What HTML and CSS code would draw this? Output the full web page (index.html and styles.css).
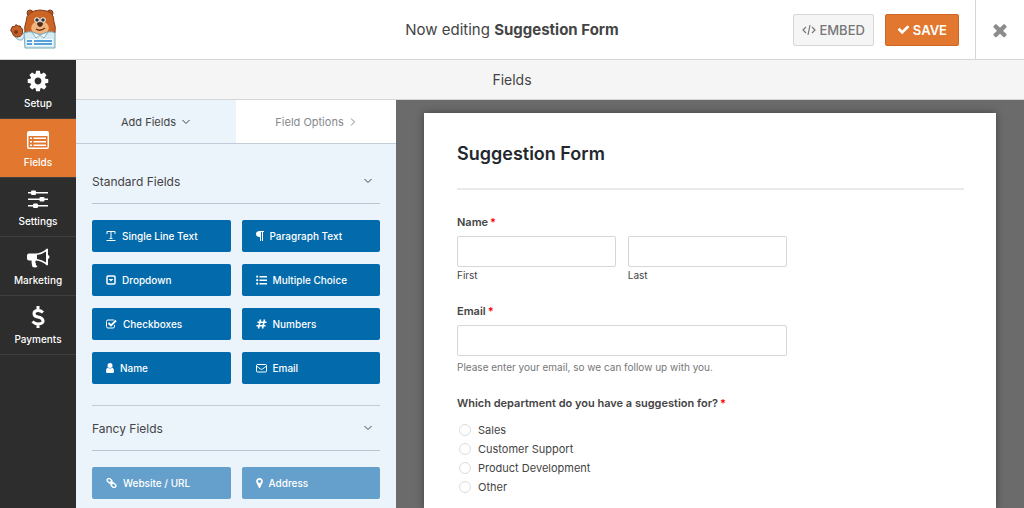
FILE: index.html
```html
<!DOCTYPE html>
<html lang="en">
<head>
  <meta charset="UTF-8" />
  <meta name="viewport" content="width=device-width, initial-scale=1" />
  <title>Suggestion Form - Form Builder</title>
  <link rel="stylesheet" href="styles.css">
</head>
<body>
  <header class="top-bar">
    <a href="#" class="logo" aria-label="Dashboard">
      <svg width="48" height="42" viewBox="0 0 48 42">
        <path d="M4 25 Q6 32 12 31 L17 24 L11 24 Z" fill="#d8ecf1" stroke="#86b3c1"/>
        <path d="M1.500 19 q1-3 3-1 q1-4 3.500-1 q3-1 3 2 q2.500 0 1.500 4 q0 4-4.500 5 q-5 0-5.500-4 q-3-2-1-5z" fill="#c5602a" stroke="#7d3a17"/>
        <ellipse cx="6" cy="23" rx="2" ry="2" fill="#7d3a17"/>
        <circle cx="20" cy="4" r="3" fill="#b9591f" stroke="#7d3a17"/>
        <circle cx="40" cy="4" r="3" fill="#b9591f" stroke="#7d3a17"/>
        <path d="M20 4 Q25 1 30 1 Q36 1 41 4 Q44 7 44 13 Q46 17 45 24 L15 24 Q14 17 16 13 Q16 7 20 4z" fill="#cc6425" stroke="#85401d"/>
        <path d="M22 16 Q25 12 30 12 Q35 12 38 16 Q40 20 37 23 Q30 26 23 23 Q20 20 22 16z" fill="#f0b47c"/>
        <circle cx="27" cy="11" r="2.800" fill="#dfe6e8"/>
        <circle cx="33" cy="11" r="2.800" fill="#dfe6e8"/>
        <circle cx="27" cy="11" r="1.700" fill="#30353a"/>
        <circle cx="33" cy="11" r="1.700" fill="#30353a"/>
        <path d="M27 14 Q30 12 33 14 Q33 17 30 18 Q27 17 27 14z" fill="#4d2c20"/>
        <path d="M26 20 Q30 23 35 19" fill="none" stroke="#6b3217" stroke-width="1.300"/>
        <path d="M14 24 Q19 22 22 23 L30 26 L38 23 Q42 22 45 24 L45 39 L15 39z" fill="#d3ebf1" stroke="#79a9b8"/>
        <path d="M22 23 L26 29 L30 26 L34 29 L38 23 L30 26z" fill="#f8fdfe" stroke="#87b1be"/>
        <path d="M17 30h26v7H17z" fill="#f4fbfd"/>
        <path d="M17 32h5M24 32h18M17 35h5M24 35h18" stroke="#2382cf" stroke-width="1.600"/>
      </svg>
    </a>
    <p class="editing">Now editing <strong>Suggestion Form</strong></p>
    <div class="actions">
      <button class="btn embed-btn">
        <svg width="14" height="12" viewBox="0 0 14 12" fill="none" stroke="currentColor" stroke-width="1.200"><path d="M4 3 1 6l3 3M10 3l3 3-3 3M8 1 6 11"/></svg>
        EMBED
      </button>
      <button class="btn save-btn">
        <svg width="13" height="13" viewBox="0 0 1792 1792" fill="currentColor"><path d="M1671 566q0 40-28 68l-724 724-136 136q-28 28-68 28t-68-28l-136-136-362-362q-28-28-28-68t28-68l136-136q28-28 68-28t68 28l294 295 656-657q28-28 68-28t68 28l136 136q28 28 28 68z"/></svg>
        SAVE
      </button>
      <button class="close-btn" aria-label="Close">
        <svg width="20" height="20" viewBox="0 0 1792 1792" fill="currentColor"><path d="M1490 1322q0 40-28 68l-136 136q-28 28-68 28t-68-28l-294-294-294 294q-28 28-68 28t-68-28l-136-136q-28-28-28-68t28-68l294-294-294-294q-28-28-28-68t28-68l136-136q28-28 68-28t68 28l294 294 294-294q28-28 68-28t68 28l136 136q28 28 28 68t-28 68l-294 294 294 294q28 28 28 68z"/></svg>
      </button>
    </div>
  </header>

  <div class="builder">
    <nav class="side-nav">
      <a href="#">
        <svg width="24" height="24" viewBox="0 0 1792 1792" fill="currentColor"><path d="M1152 896q0-106-75-181t-181-75-181 75-75 181 75 181 181 75 181-75 75-181zm512-109v222q0 12-8 23t-20 13l-185 28q-19 54-39 91 35 50 107 138 10 12 10 25t-9 23q-27 37-99 108t-94 71q-12 0-26-9l-138-108q-44 23-91 38-16 136-29 186-7 28-36 28h-222q-14 0-24.500-8.500t-11.500-21.500l-28-184q-49-16-90-37l-141 107q-10 9-25 9-14 0-25-11-126-114-165-168-7-10-7-23 0-12 8-23 15-21 51-66.500t54-70.500q-27-50-41-99l-183-27q-13-2-21-12.500t-8-23.500v-222q0-12 8-23t19-13l186-28q14-46 39-92-40-57-107-138-10-12-10-24 0-10 9-23 26-36 98.500-107.500t94.500-71.500q13 0 26 10l138 107q44-23 91-38 16-136 29-186 7-28 36-28h222q14 0 24.500 8.500t11.500 21.500l28 184q49 16 90 37l142-107q9-9 24-9 13 0 25 10 129 119 165 170 7 8 7 22 0 12-8 23-15 21-51 66.500t-54 70.500q26 50 41 98l183 28q13 2 21 12.500t8 23.500z"/></svg>
        Setup
      </a>
      <a href="#" class="active">
        <svg width="24" height="24" viewBox="0 0 24 24" fill="currentColor"><path fill-rule="evenodd" d="M3 3h18a2 2 0 0 1 2 2v14a2 2 0 0 1-2 2H3a2 2 0 0 1-2-2V5a2 2 0 0 1 2-2zM2.500 8v11q0 .5.5.5h18q.5 0 .5-.5V8z"/><path d="M4 9.500h2V11H4zM4 13h2v1.500H4zM4 16.500h2V18H4zM7.500 9.500H20V11H7.500zM7.500 13H20v1.500H7.500zM7.500 16.500H20V18H7.500z"/></svg>
        Fields
      </a>
      <a href="#">
        <svg width="24" height="24" viewBox="0 0 24 24" fill="currentColor"><path d="M2 5h20v1.500H2zM2 11.500h20V13H2zM2 18h20v1.500H2z"/><rect x="5" y="3.500" width="5" height="4.500" rx="1"/><rect x="13.500" y="10" width="5" height="4.500" rx="1"/><rect x="7" y="16.500" width="5" height="4.500" rx="1"/></svg>
        Settings
      </a>
      <a href="#">
        <svg width="24" height="24" viewBox="0 0 24 24" fill="currentColor"><path fill-rule="evenodd" d="M21 2.500q1 0 1 1V9q1.500.5 1.500 2T22 13v5.500q0 1-1 1-5-4.500-11-5-1.500 1.500 0 3-.5 1 .5 2l1 1q-1.500 1.500-5 .5-1-3-1-6.500H3q-2 0-2-2v-3q0-2 2-2h6Q15.500 7.500 21 2.500zM20 5.500Q16 8.500 11 9v4q5 .5 9 3.500z"/></svg>
        Marketing
      </a>
      <a href="#">
        <svg width="24" height="24" viewBox="0 0 24 24" fill="none" stroke="currentColor" stroke-width="3"><path d="M17 7.500Q15 5.500 12 5.500q-4 0-4 3T12 12t5 3.500-5 3.500q-3 0-5.500-2.500M12 1v5M12 19v4"/></svg>
        Payments
      </a>
    </nav>

    <div class="workspace">
      <h1 class="panel-title">Fields</h1>
      <div class="columns">
        <aside class="field-panel">
          <div class="tabs">
            <button class="tab active">Add Fields <svg width="10" height="8" viewBox="0 0 10 8"><path d="M1.500 2 5 5.500 8.500 2"/></svg></button>
            <button class="tab">Field Options <svg width="8" height="10" viewBox="0 0 8 10"><path d="M2 1.500 5.500 5 2 8.500"/></svg></button>
          </div>

          <section class="field-group">
            <h2><button class="group-toggle">Standard Fields <svg width="10" height="8" viewBox="0 0 10 8"><path d="M1.500 2 5 5.500 8.500 2"/></svg></button></h2>
            <div class="field-grid">
              <button class="field-btn"><svg width="10" height="10" viewBox="0 0 10 10" fill="none" stroke="currentColor"><path d="M1 3V.5h8V3M5 .5v7M3.500 7.500h3M.5 9.500h9"/></svg>Single Line Text</button>
              <button class="field-btn"><svg width="8" height="10" viewBox="0 0 8 10" fill="currentColor"><path d="M8 0v1H7v9H6V1H5v9H4V6Q0 6 0 3t4-3z"/></svg>Paragraph Text</button>
              <button class="field-btn"><svg width="10" height="10" viewBox="0 0 10 10"><rect x="1" y="1" width="8" height="8" rx="1" fill="none" stroke="currentColor" stroke-width="1.500"/><path d="M2.500 4h5L5 6.500z" fill="currentColor"/></svg>Dropdown</button>
              <button class="field-btn"><svg width="11" height="10" viewBox="0 0 11 10" fill="currentColor"><path d="M3.500 1H11v1.500H3.500zM3.500 4.500H11V6H3.500zM3.500 8H11v1.500H3.500z"/><circle cx="1.200" cy="1.700" r="1.100"/><circle cx="1.200" cy="5.200" r="1.100"/><circle cx="1.200" cy="8.700" r="1.100"/></svg>Multiple Choice</button>
              <button class="field-btn"><svg width="11" height="10" viewBox="0 0 11 10" fill="none" stroke="currentColor"><path d="M8 1H2Q.5 1 .5 2.500v5Q.5 9 2 9h5q1.500 0 1.500-1.500V6"/><path d="M2.500 4l2.500 2.500L10 1.500" stroke-width="1.800"/></svg>Checkboxes</button>
              <button class="field-btn"><svg width="11" height="10" viewBox="0 0 11 10" fill="none" stroke="currentColor" stroke-width="1.600"><path d="M4.500.5l-2 9M8.500.5l-2 9M1.500 3.200h9M.5 6.800h9"/></svg>Numbers</button>
              <button class="field-btn"><svg width="8" height="10" viewBox="0 0 8 10" fill="currentColor"><circle cx="4" cy="2.500" r="2.500"/><path d="M1.500 4.500Q4 6.500 6.500 4.500 8 5.500 8 8.500 8 10 6.500 10h-5Q0 10 0 8.500q0-3 1.500-4z"/></svg>Name</button>
              <button class="field-btn"><svg width="11" height="10" viewBox="0 0 11 10" fill="none" stroke="currentColor"><rect x=".5" y="1.500" width="10" height="7.500" rx="1"/><path d="M.5 3Q3 5 4.500 6q1 .6 2 0Q8 5 10.500 3"/></svg>Email</button>
            </div>
          </section>

          <section class="field-group">
            <h2><button class="group-toggle">Fancy Fields <svg width="10" height="8" viewBox="0 0 10 8"><path d="M1.500 2 5 5.500 8.500 2"/></svg></button></h2>
            <div class="field-grid">
              <button class="field-btn pro"><svg width="11" height="10" viewBox="0 0 11 10" fill="none" stroke="currentColor" stroke-width="1.400"><rect x="1" y="1" width="5" height="3.500" rx="1.600" transform="rotate(40 3.500 2.700)"/><rect x="5" y="5.500" width="5" height="3.500" rx="1.600" transform="rotate(40 7.500 7.200)"/><path d="M4.300 3.500l2.400 2.800"/></svg>Website / URL</button>
              <button class="field-btn pro"><svg width="7" height="10" viewBox="384 128 1024 1536" fill="currentColor"><path d="M1152 640q0-106-75-181t-181-75-181 75-75 181 75 181 181 75 181-75 75-181zm256 0q0 109-33 179l-364 774q-16 33-47.500 52t-67.500 19-67.500-19-46.500-52l-365-774q-33-70-33-179 0-212 150-362t362-150 362 150 150 362z"/></svg>Address</button>
            </div>
          </section>
        </aside>

        <main class="preview">
          <form class="form-card">
            <h2 class="form-title">Suggestion Form</h2>

            <fieldset class="form-field">
              <legend>Name<span class="required">*</span></legend>
              <div class="name-row">
                <div>
                  <input type="text" id="first-name">
                  <label for="first-name" class="sub-label">First</label>
                </div>
                <div>
                  <input type="text" id="last-name">
                  <label for="last-name" class="sub-label">Last</label>
                </div>
              </div>
            </fieldset>

            <div class="form-field">
              <label for="email" class="field-label">Email<span class="required">*</span></label>
              <input type="email" id="email">
              <p class="description">Please enter your email, so we can follow up with you.</p>
            </div>

            <fieldset class="form-field wide">
              <legend>Which department do you have a suggestion for?<span class="required">*</span></legend>
              <div class="choices">
                <label><input type="radio" name="department">Sales</label>
                <label><input type="radio" name="department">Customer Support</label>
                <label><input type="radio" name="department">Product Development</label>
                <label><input type="radio" name="department">Other</label>
              </div>
            </fieldset>
          </form>
        </main>
      </div>
    </div>
  </div>
</body>
</html>
```

FILE: styles.css
```css
* {
  box-sizing: border-box;
}

body {
  margin: 0;
  height: 100vh;
  display: flex;
  flex-direction: column;
  overflow: hidden;
  font-family: Inter, "Liberation Sans", sans-serif;
  font-size: 11px;
  color: #444;
  background-color: #fff;
}

button,
input {
  font: inherit;
  color: inherit;
}

button {
  cursor: pointer;
}

svg {
  flex: none;
}

h1,
h2,
p {
  margin: 0;
}

/* Top bar */
.top-bar {
  display: grid;
  grid-template-columns: 1fr auto 1fr;
  align-items: center;
  height: 60px;
  flex: none;
  border-bottom: 1px solid #d6d6d6;
}

.logo {
  display: flex;
  padding-left: 10px;
}

.editing {
  font-size: 15px;
}

.actions {
  display: flex;
  align-items: center;
  justify-content: flex-end;
  align-self: stretch;
}

.btn {
  display: flex;
  align-items: center;
  justify-content: center;
  gap: 3px;
  height: 32px;
  padding: 0 8px;
  border: 1px solid #d6d6d6;
  border-radius: 2px;
  font-size: 13px;
  font-weight: 500;
  margin-right: 11px;
}

.embed-btn {
  background-color: #f5f5f5;
  color: #777;
}

.save-btn {
  padding: 0 11px;
  background-color: #e27730;
  border-color: #cd6622;
  color: #fff;
  font-weight: 600;
  margin-right: 16px;
}

.close-btn {
  display: flex;
  align-items: center;
  justify-content: center;
  align-self: stretch;
  width: 49px;
  border: 0;
  border-left: 1px solid #d6d6d6;
  background: none;
  color: #8c8c8c;
}

/* Sidebar */
.builder {
  display: flex;
  flex: 1;
  min-height: 0;
}

.side-nav {
  width: 76px;
  flex: none;
  background-color: #2d2d2d;
}

.side-nav a {
  display: flex;
  flex-direction: column;
  align-items: center;
  justify-content: center;
  gap: 3px;
  height: 59px;
  border-bottom: 1px solid #404040;
  color: #fff;
  font-size: 10px;
  font-weight: 500;
  line-height: 14px;
  text-decoration: none;
}

.side-nav a.active {
  background-color: #e27730;
}

.workspace {
  display: flex;
  flex-direction: column;
  flex: 1;
  min-width: 0;
}

.panel-title {
  height: 40px;
  flex: none;
  padding-right: 76px;
  border-bottom: 1px solid #d6d6d6;
  background-color: #f5f5f5;
  font-size: 14px;
  font-weight: 400;
  line-height: 39px;
  text-align: center;
}

.columns {
  display: flex;
  flex: 1;
  min-height: 0;
}

/* Field panel */
.field-panel {
  width: 320px;
  flex: none;
  overflow: hidden;
  background-color: #ebf3fb;
}

.tabs {
  display: grid;
  grid-template-columns: 1fr 1fr;
  border-bottom: 1px solid #c3cdd9;
  margin-bottom: 15px;
}

.tab {
  display: flex;
  align-items: center;
  justify-content: center;
  gap: 5px;
  height: 43px;
  border: 0;
  background-color: #fff;
  color: #86898d;
  font-size: 11px;
}

.tab.active {
  background-color: #ebf3fb;
  color: #444;
}

.tab svg,
.group-toggle svg {
  fill: none;
  stroke: currentColor;
}

.field-group {
  padding: 0 16px;
}

.field-group h2 {
  border-bottom: 1px solid #b9c3d1;
  font-size: 12px;
  font-weight: 400;
}

.field-group + .field-group h2 {
  margin-top: 21px;
  border-top: 1px solid #c3cdd9;
}

.group-toggle {
  display: flex;
  align-items: center;
  justify-content: space-between;
  width: 100%;
  height: 44px;
  padding: 0 7px 0 0;
  border: 0;
  background: none;
}

.field-grid {
  display: grid;
  grid-template-columns: 1fr 1fr;
  gap: 12px 11px;
  margin-top: 16px;
}

.field-btn {
  display: flex;
  align-items: center;
  gap: 6px;
  height: 32px;
  padding: 0 14px;
  border: 0;
  border-radius: 2px;
  background-color: #036aab;
  color: #fff;
  font-size: 10px;
  font-weight: 500;
  text-align: left;
}

.field-btn.pro {
  background-color: #659fcc;
}

/* Form preview */
.preview {
  display: flex;
  flex: 1;
  min-width: 0;
  padding: 13px 28px 0;
  background-color: #6b6b6b;
  overflow: hidden;
}

.form-card {
  flex: 1;
  min-width: 0;
  padding: 28px 32px 0 33px;
  background-color: #fff;
  box-shadow: 0 0 8px rgba(0, 0, 0, 0.4);
}

.form-title {
  padding-bottom: 22px;
  border-bottom: 2px solid #eaeaea;
  margin-bottom: 24px;
  color: #23282e;
  font-size: 18px;
  font-weight: 600;
  line-height: 25px;
}

.form-field {
  width: 65%;
  padding: 0;
  border: 0;
  margin: 0 0 20px;
}

.form-field.wide {
  width: 100%;
}

legend,
.field-label {
  display: block;
  padding: 0;
  margin-bottom: 6px;
  font-weight: 600;
  line-height: 16px;
}

.required {
  margin-left: 2px;
  color: #f00;
}

.name-row {
  display: grid;
  grid-template-columns: 1fr 1fr;
  gap: 12px;
}

input[type="text"],
input[type="email"] {
  display: block;
  width: 100%;
  height: 31px;
  padding: 0 8px;
  border: 1px solid #d6d6d6;
  border-radius: 2px;
  background-color: #fff;
}

.sub-label,
.description {
  display: block;
  font-size: 10px;
  line-height: 16px;
}

.description {
  margin-top: 3px;
  color: #777;
}

.choices {
  display: grid;
  gap: 3px;
  padding: 5px 0 0 2px;
}

.choices label {
  display: flex;
  align-items: center;
  gap: 7px;
  line-height: 16px;
}

.choices input {
  appearance: none;
  width: 12px;
  height: 12px;
  border: 1px solid #dcdcdc;
  border-radius: 50%;
  margin: 0;
}
```
